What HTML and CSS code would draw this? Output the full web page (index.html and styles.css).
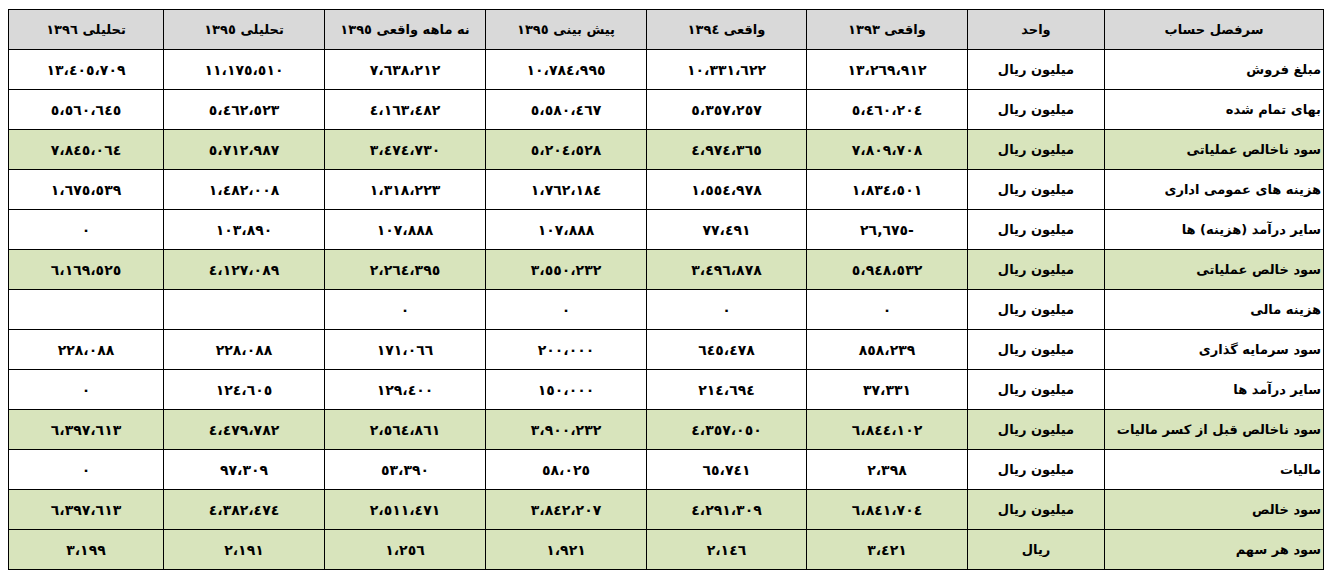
FILE: index.html
```html
<!DOCTYPE html>
<html lang="fa" dir="rtl">
<head>
<meta charset="utf-8">
<title>جدول</title>
<link rel="stylesheet" href="styles.css">
</head>
<body>
<table class="fin">
<colgroup>
<col class="c-title"><col class="c-unit"><col class="c-a"><col class="c-b"><col class="c-c"><col class="c-d"><col class="c-e"><col class="c-f">
</colgroup>
<thead>
<tr><th>سرفصل حساب</th><th>واحد</th><th>واقعی ١٣٩٣</th><th>واقعی ١٣٩٤</th><th>پیش بینی ١٣٩٥</th><th>نه ماهه واقعی ١٣٩٥</th><th>تحلیلی ١٣٩٥</th><th>تحلیلی ١٣٩٦</th></tr>
</thead>
<tbody>
<tr><td class="t">مبلغ فروش</td><td>میلیون ریال</td><td>١٣،٢٦٩،٩١٢</td><td>١٠،٣٣١،٦٢٢</td><td>١٠،٧٨٤،٩٩٥</td><td>٧،٦٣٨،٢١٢</td><td>١١،١٧٥،٥١٠</td><td>١٣،٤٠٥،٧٠٩</td></tr>
<tr><td class="t">بهای تمام شده</td><td>میلیون ریال</td><td>٥،٤٦٠،٢٠٤</td><td>٥،٣٥٧،٢٥٧</td><td>٥،٥٨٠،٤٦٧</td><td>٤،١٦٣،٤٨٢</td><td>٥،٤٦٢،٥٢٣</td><td>٥،٥٦٠،٦٤٥</td></tr>
<tr class="g"><td class="t">سود ناخالص عملیاتی</td><td>میلیون ریال</td><td>٧،٨٠٩،٧٠٨</td><td>٤،٩٧٤،٣٦٥</td><td>٥،٢٠٤،٥٢٨</td><td>٣،٤٧٤،٧٣٠</td><td>٥،٧١٢،٩٨٧</td><td>٧،٨٤٥،٠٦٤</td></tr>
<tr><td class="t">هزینه های عمومی اداری</td><td>میلیون ریال</td><td>١،٨٣٤،٥٠١</td><td>١،٥٥٤،٩٧٨</td><td>١،٧٦٢،١٨٤</td><td>١،٣١٨،٢٢٣</td><td>١،٤٨٢،٠٠٨</td><td>١،٦٧٥،٥٣٩</td></tr>
<tr><td class="t">سایر درآمد (هزینه) ها</td><td>میلیون ریال</td><td>-٢٦,٦٧٥</td><td>٧٧،٤٩١</td><td>١٠٧،٨٨٨</td><td>١٠٧،٨٨٨</td><td>١٠٣،٨٩٠</td><td>٠</td></tr>
<tr class="g"><td class="t">سود خالص عملیاتی</td><td>میلیون ریال</td><td>٥،٩٤٨،٥٣٢</td><td>٣،٤٩٦،٨٧٨</td><td>٣،٥٥٠،٢٣٢</td><td>٢،٢٦٤،٣٩٥</td><td>٤،١٢٧،٠٨٩</td><td>٦،١٦٩،٥٢٥</td></tr>
<tr><td class="t">هزینه مالی</td><td>میلیون ریال</td><td>٠</td><td>٠</td><td>٠</td><td>٠</td><td></td><td></td></tr>
<tr><td class="t">سود سرمایه گذاری</td><td>میلیون ریال</td><td>٨٥٨،٢٣٩</td><td>٦٤٥،٤٧٨</td><td>٢٠٠،٠٠٠</td><td>١٧١،٠٦٦</td><td>٢٢٨،٠٨٨</td><td>٢٢٨،٠٨٨</td></tr>
<tr><td class="t">سایر درآمد ها</td><td>میلیون ریال</td><td>٣٧،٣٣١</td><td>٢١٤،٦٩٤</td><td>١٥٠،٠٠٠</td><td>١٢٩،٤٠٠</td><td>١٢٤،٦٠٥</td><td>٠</td></tr>
<tr class="g"><td class="t">سود ناخالص قبل از کسر مالیات</td><td>میلیون ریال</td><td>٦،٨٤٤،١٠٢</td><td>٤،٣٥٧،٠٥٠</td><td>٣،٩٠٠،٢٣٢</td><td>٢،٥٦٤،٨٦١</td><td>٤،٤٧٩،٧٨٢</td><td>٦،٣٩٧،٦١٣</td></tr>
<tr><td class="t">مالیات</td><td>میلیون ریال</td><td>٢،٣٩٨</td><td>٦٥،٧٤١</td><td>٥٨،٠٢٥</td><td>٥٣،٣٩٠</td><td>٩٧،٣٠٩</td><td>٠</td></tr>
<tr class="g"><td class="t">سود خالص</td><td>میلیون ریال</td><td>٦،٨٤١،٧٠٤</td><td>٤،٢٩١،٣٠٩</td><td>٣،٨٤٢،٢٠٧</td><td>٢،٥١١،٤٧١</td><td>٤،٣٨٢،٤٧٤</td><td>٦،٣٩٧،٦١٣</td></tr>
<tr class="g"><td class="t">سود هر سهم</td><td>ریال</td><td>٣،٤٢١</td><td>٢،١٤٦</td><td>١،٩٢١</td><td>١،٢٥٦</td><td>٢،١٩١</td><td>٣،١٩٩</td></tr>
</tbody>
</table>
</body>
</html>
```
FILE: styles.css
```css
html, body {
  background: #fff;
}
body {
  margin: 9px 9px 0 8px;
  font-family: "DejaVu Sans", sans-serif;
  color: #000;
}
.fin {
  border-collapse: collapse;
  table-layout: fixed;
  width: 1316px;
  direction: rtl;
}
.c-title { width: 219px; }
.c-unit { width: 137px; }
.c-a { width: 161px; }
.c-b { width: 160px; }
.c-c { width: 161px; }
.c-d { width: 161px; }
.c-e { width: 161px; }
.c-f { width: 155px; }
.fin th, .fin td {
  border: 1px solid #000;
  height: 39px;
  padding: 0 2px;
  text-align: center;
  vertical-align: middle;
  font-size: 13px;
  font-weight: bold;
  white-space: nowrap;
  overflow: hidden;
}
.fin tbody td:nth-child(n+3) {
  font-size: 14px;
}
.fin thead th {
  background: #d9d9d9;
}
.fin td.t {
  text-align: right;
}
.fin tr.g td {
  background: #d8e4bc;
}
```
